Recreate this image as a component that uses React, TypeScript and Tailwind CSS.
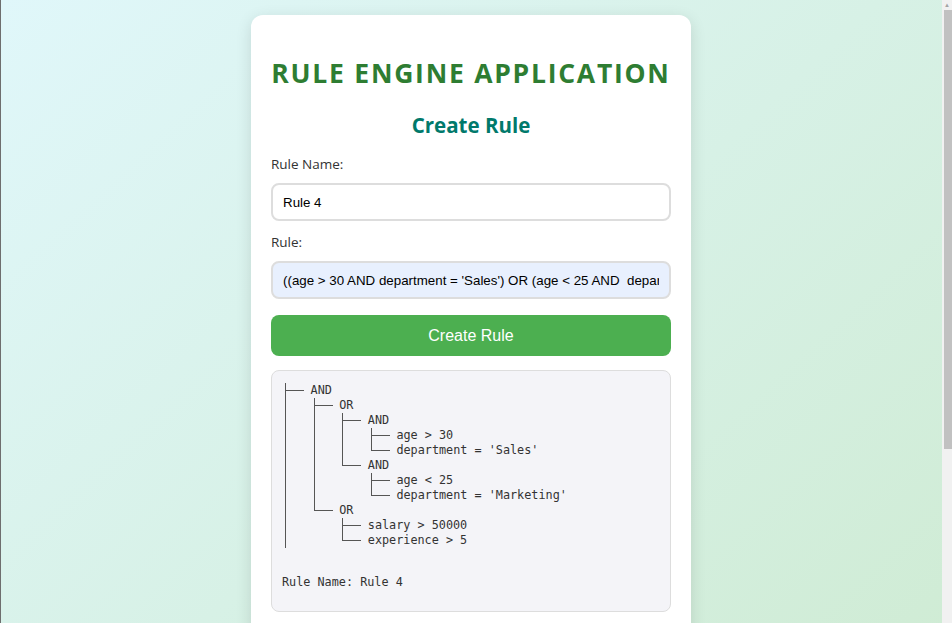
import React from "react";

type Cell = "pipe" | "tee" | "end" | "blank";

const rows: { cells: Cell[]; text: string }[] = [
  { cells: ["tee"], text: "AND" },
  { cells: ["pipe", "tee"], text: "OR" },
  { cells: ["pipe", "pipe", "tee"], text: "AND" },
  { cells: ["pipe", "pipe", "pipe", "tee"], text: "age > 30" },
  { cells: ["pipe", "pipe", "pipe", "end"], text: "department = 'Sales'" },
  { cells: ["pipe", "pipe", "end"], text: "AND" },
  { cells: ["pipe", "pipe", "blank", "tee"], text: "age < 25" },
  { cells: ["pipe", "pipe", "blank", "end"], text: "department = 'Marketing'" },
  { cells: ["pipe", "end"], text: "OR" },
  { cells: ["pipe", "blank", "tee"], text: "salary > 50000" },
  { cells: ["pipe", "blank", "end"], text: "experience > 5" },
];

const ruleText =
  "((age > 30 AND department = 'Sales') OR (age < 25 AND  department = 'Marketing')) AND (salary > 50000 OR experience > 5)";

function Connector({ kind }: { kind: Cell }) {
  if (kind === "blank") return <div className="h-full w-[28.6px] shrink-0" />;
  if (kind === "pipe")
    return (
      <div className="h-full w-[28.6px] shrink-0">
        <div className="ml-[3px] h-full border-l border-[#555]" />
      </div>
    );
  return (
    <div className="flex h-full w-[28.6px] shrink-0 flex-col">
      <div className="ml-[3px] h-[8px] w-[19px] border-b border-l border-[#555]" />
      {kind === "tee" ? <div className="ml-[3px] flex-1 border-l border-[#555]" /> : <div className="flex-1" />}
    </div>
  );
}

export default function App() {
  return (
    <div className="flex h-screen">
      <div className="flex-1 overflow-hidden">
        <div className="min-h-[856px] bg-gradient-to-br from-[#e0f7fa] to-[#cdeacf] pt-[15px] pb-[15px] font-['Open_Sans',sans-serif] shadow-[inset_1px_0_0_#6e6e6e]">
          <div className="mx-auto w-[440px] rounded-xl bg-white px-5 pt-[40px] pb-[240px] shadow-[0_4px_16px_rgba(0,0,0,0.12)]">
            <h1 className="whitespace-nowrap text-center text-[26.5px] font-bold leading-9 tracking-[1.75px] text-[#2e7d32]">
              RULE ENGINE APPLICATION
            </h1>

            <h2 className="mt-[18px] text-center text-[20.5px] font-bold leading-8 text-[#00796b]">
              Create Rule
            </h2>

            <form className="mt-[13px] flex flex-col">
              <label className="text-[13.5px] leading-5 text-[#333]">Rule Name:</label>
              <input
                className="mt-[9px] h-[38px] rounded-lg border-2 border-[#ddd] px-[10px] font-['Liberation_Sans',sans-serif] text-[13.33px] text-black outline-none"
                defaultValue="Rule 4"
              />

              <label className="mt-[11px] text-[13.5px] leading-5 text-[#333]">Rule:</label>
              <input
                className="mt-[9px] h-[38px] rounded-lg border-2 border-[#ddd] bg-[#e8f0fe] px-[10px] font-['Liberation_Sans',sans-serif] text-[13.33px] text-black outline-none"
                defaultValue={ruleText}
              />

              <button
                type="button"
                className="mt-4 h-[41px] rounded-lg bg-[#4caf50] font-['Liberation_Sans',sans-serif] text-base text-white"
              >
                Create Rule
              </button>
            </form>

            <div className="mt-[14px] rounded-lg border border-[#ddd] bg-[#f4f4f8] pt-[12px] pr-[10px] pb-[21px] pl-[10px] font-['DejaVu_Sans_Mono',monospace] text-[11.8px] leading-[15px] text-[#333]">
              {rows.map((r, i) => (
                <div key={i} className="flex h-[15px] items-stretch">
                  {r.cells.map((c, j) => (
                    <Connector key={j} kind={c} />
                  ))}
                  <span className="whitespace-pre">{r.text}</span>
                </div>
              ))}
              <div className="mt-[27px] whitespace-pre">Rule Name: Rule 4</div>
            </div>
          </div>
        </div>
      </div>

      <div className="flex w-[10px] shrink-0 flex-col bg-[#f1f1f1]">
        <div className="flex h-[10px] items-center justify-center text-[6px] leading-none text-[#a3a3a3]">▲</div>
        <div className="ml-[2px] h-[439px] bg-[#c1c1c1]" />
      </div>
    </div>
  );
}
